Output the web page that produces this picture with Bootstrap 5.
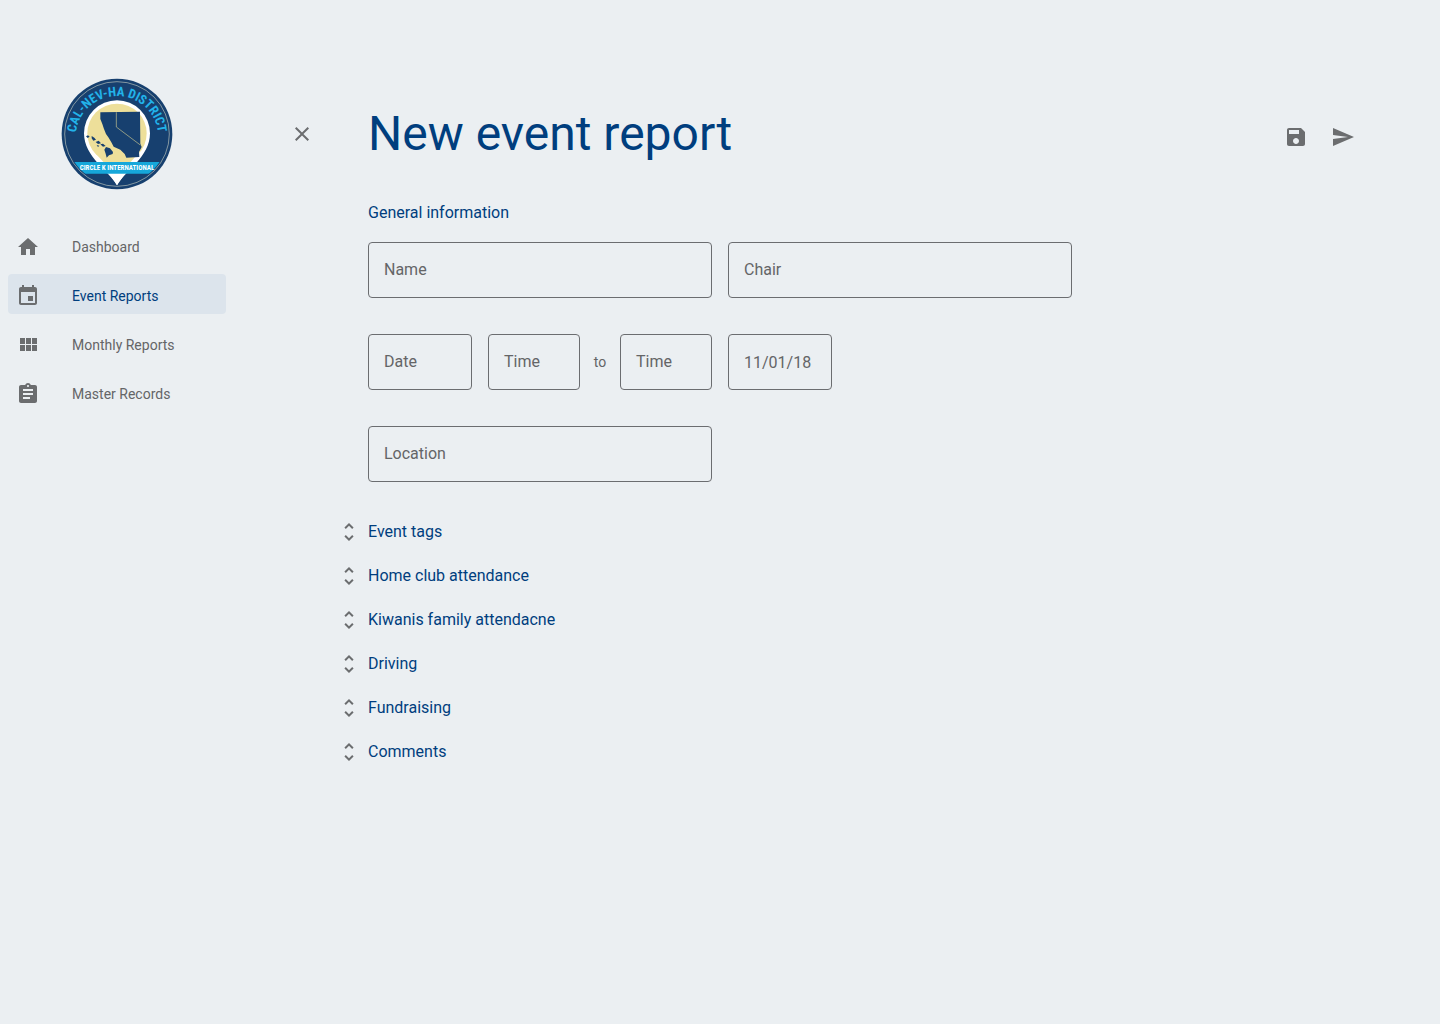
<!DOCTYPE html>
<html lang="en">
<head>
<meta charset="utf-8">
<meta name="viewport" content="width=device-width, initial-scale=1">
<title>New event report</title>
<link href="https://cdn.jsdelivr.net/npm/bootstrap@5.3.0/dist/css/bootstrap.min.css" rel="stylesheet">
<style>
  :root { --page: #ebeff2; --navy: #003e7e; --ink: #646567; --icon: #6b6d6f; }
  body { background: var(--page); color: var(--ink); font-family: Roboto, sans-serif; font-size: 16px; line-height: 24px; }
  .glyph { width: 24px; height: 24px; fill: var(--icon); flex: none; display: block; }
  .side-bar { width: 234px; padding: 78px 8px 0; }
  .crest { width: 112px; height: 112px; display: block; margin: 0 auto 35px; }
  .crest text { font-family: "Roboto Condensed", Roboto, sans-serif; font-weight: 700; text-anchor: middle; }
  .side-nav { gap: 9px; }
  .side-link { height: 40px; padding: 10px 8px 0; gap: 32px; border-radius: 4px; font-size: 14px; color: var(--ink); text-decoration: none; }
  .side-link.active { background: #dce4ec; color: var(--navy); }
  .work-area { padding: 98px 85px 40px 56px; }
  .top-line { gap: 54px; }
  .page-title { font-size: 48px; line-height: 72px; color: var(--navy); font-weight: 400; }
  .tools { gap: 23px; padding-top: 6px; }
  .report-body { max-width: 735px; margin-left: 47px; }
  .form-part { padding-left: 31px; }
  .group-title { font-size: 16px; line-height: 24px; font-weight: 400; color: var(--navy); margin: 31px 0 17px; }
  .form-floating > .field, .field { height: 56px; min-height: 56px; line-height: 24px; padding: 0 15px; border: 1px solid #6b6d70; border-radius: 4px; background: transparent; color: var(--ink); box-shadow: none; }
  .form-floating > .field:focus, .field:focus { background: transparent; border-color: var(--navy); box-shadow: none; }
  .form-floating > .field:not(:placeholder-shown), .form-floating > .field:focus { padding: 20px 15px 4px; }
  .form-floating > label { height: 56px; padding: 15px; line-height: 24px; color: var(--ink); }
  .date-field { width: 104px; }
  .time-field { width: 92px; }
  .to-text { width: 40px; font-size: 14px; text-align: center; }
  .line-gap { margin-bottom: 36px; }
  .fold-list { gap: 20px; padding-top: 2px; }
  .fold { gap: 7px; color: var(--navy); height: 24px; }
</style>
</head>
<body>
<div class="d-flex min-vh-100">
  <aside class="side-bar flex-shrink-0">
    <svg class="crest" viewBox="0 0 336 336" role="img" aria-label="Cal-Nev-Ha District, Circle K International">
      <defs>
        <path id="arc" d="M44 178A124 124 0 1 1 292 178"/>
        <clipPath id="disc"><circle cx="168" cy="168" r="153"/></clipPath>
      </defs>
      <circle cx="168" cy="168" r="166" fill="#17406f"/>
      <circle cx="168" cy="168" r="157" fill="none" stroke="#b9c3b9" stroke-width="2"/>
      <path fill="#fff" d="M168 322C145 280 69 237 69 166a99 99 0 0 1 198 0C267 237 191 280 168 322Z"/>
      <circle cx="168" cy="166" r="89" fill="#eddf9a"/>
      <path fill="#eddf9a" d="M98 220H238L208 253H128Z"/>
      <path fill="#17406f" d="M118 103L237 101 238 197 242 207 234 222 235 237 196 239 191 228 178 215 158 206 151 193 143 179 135 168 129 153 124 138 118 123Z"/>
      <path fill="none" stroke="#c9c68f" stroke-width="2" d="M166 103V147L238 201"/>
      <path fill="#17406f" d="M135 207l12 4 9 11-1 6-11 4-7 7-3-12-4-12zM118 199l8-2 8 7-8 2zM104 192l9-4 7 8-9 2zM107 201l8 2-4 4zM92 174l8 5 5 6-8 3-5-7zM75 175l6-3 5 4-6 4z"/>
      <g clip-path="url(#disc)"><path fill="#16a7da" d="M0 252H336V287H0z"/></g>
      <path fill="#fff" d="M146 288H191L168 322Z"/>
      <text font-size="39" fill="#22b3ea"><textPath href="#arc" startOffset="50%">CAL-NEV-HA DISTRICT</textPath></text>
      <text x="168" y="277" font-size="21" fill="#fff">CIRCLE K INTERNATIONAL</text>
    </svg>
    <nav class="side-nav d-flex flex-column" aria-label="Main">
      <a class="side-link d-flex" href="#"><svg class="glyph" viewBox="0 0 24 24"><path d="M10 20v-6h4v6h5v-8h3L12 3 2 12h3v8z"/></svg>Dashboard</a>
      <a class="side-link d-flex active" href="#" aria-current="page"><svg class="glyph" viewBox="0 0 24 24"><path d="M17 12h-5v5h5v-5zM16 1v2H8V1H6v2H5c-1.11 0-1.99.9-1.99 2L3 19c0 1.1.89 2 2 2h14c1.1 0 2-.9 2-2V5c0-1.1-.9-2-2-2h-1V1h-2zm3 18H5V8h14v11z"/></svg>Event Reports</a>
      <a class="side-link d-flex" href="#"><svg class="glyph" viewBox="0 0 24 24"><path d="M4 11h5V5H4v6zm0 7h5v-6H4v6zm6 0h5v-6h-5v6zm6 0h5v-6h-5v6zm-6-7h5V5h-5v6zm6-6v6h5V5h-5z"/></svg>Monthly Reports</a>
      <a class="side-link d-flex" href="#"><svg class="glyph" viewBox="0 0 24 24"><path d="M19 3h-4.18C14.4 1.84 13.3 1 12 1c-1.3 0-2.4.84-2.82 2H5c-1.1 0-2 .9-2 2v14c0 1.1.9 2 2 2h14c1.1 0 2-.9 2-2V5c0-1.1-.9-2-2-2zm-7 0c.55 0 1 .45 1 1s-.45 1-1 1-1-.45-1-1 .45-1 1-1zm2 14H7v-2h7v2zm3-4H7v-2h10v2zm0-4H7V7h10v2z"/></svg>Master Records</a>
    </nav>
  </aside>

  <main class="work-area flex-grow-1">
    <header class="top-line d-flex align-items-center">
      <button class="btn p-0 border-0" type="button" aria-label="Close"><svg class="glyph" viewBox="0 0 24 24"><path d="M19 6.41L17.59 5 12 10.59 6.41 5 5 6.41 10.59 12 5 17.59 6.41 19 12 13.41 17.59 19 19 17.59 13.41 12z"/></svg></button>
      <h1 class="page-title mb-0 flex-grow-1">New event report</h1>
      <div class="tools d-flex">
        <button class="btn p-0 border-0" type="button" aria-label="Save"><svg class="glyph" viewBox="0 0 24 24"><path d="M17 3H5c-1.11 0-2 .9-2 2v14c0 1.1.89 2 2 2h14c1.1 0 2-.9 2-2V7l-4-4zm-5 16c-1.66 0-3-1.34-3-3s1.34-3 3-3 3 1.34 3 3-1.34 3-3 3zm3-10H5V5h10v4z"/></svg></button>
        <button class="btn p-0 border-0" type="button" aria-label="Send"><svg class="glyph" viewBox="0 0 24 24"><path d="M2.01 21L23 12 2.01 3 2 10l15 2-15 2z"/></svg></button>
      </div>
    </header>

    <div class="report-body">
      <form class="form-part">
        <h2 class="group-title">General information</h2>
        <div class="row gx-3 line-gap">
          <div class="col-6"><div class="form-floating"><input class="form-control field" id="name" type="text" placeholder=" "><label for="name">Name</label></div></div>
          <div class="col-6"><div class="form-floating"><input class="form-control field" id="chair" type="text" placeholder=" "><label for="chair">Chair</label></div></div>
        </div>
        <div class="d-flex align-items-center line-gap">
          <div class="form-floating date-field me-3"><input class="form-control field" id="date" type="text" placeholder=" "><label for="date">Date</label></div>
          <div class="form-floating time-field"><input class="form-control field" id="start" type="text" placeholder=" "><label for="start">Time</label></div>
          <span class="to-text">to</span>
          <div class="form-floating time-field me-3"><input class="form-control field" id="end" type="text" placeholder=" "><label for="end">Time</label></div>
          <input class="form-control field date-field" type="text" value="11/01/18" aria-label="End date">
        </div>
        <div class="row gx-3 line-gap">
          <div class="col-6"><div class="form-floating"><input class="form-control field" id="place" type="text" placeholder=" "><label for="place">Location</label></div></div>
        </div>
      </form>
      <div class="fold-list d-flex flex-column align-items-start">
        <button class="btn p-0 border-0 fold d-flex align-items-center" type="button" aria-expanded="false"><svg class="glyph" viewBox="0 0 24 24"><path d="M12 5.83L15.17 9l1.41-1.41L12 3 7.41 7.59 8.83 9 12 5.83zm0 12.34L8.83 15l-1.41 1.41L12 21l4.59-4.59L15.17 15 12 18.17z"/></svg>Event tags</button>
        <button class="btn p-0 border-0 fold d-flex align-items-center" type="button" aria-expanded="false"><svg class="glyph" viewBox="0 0 24 24"><path d="M12 5.83L15.17 9l1.41-1.41L12 3 7.41 7.59 8.83 9 12 5.83zm0 12.34L8.83 15l-1.41 1.41L12 21l4.59-4.59L15.17 15 12 18.17z"/></svg>Home club attendance</button>
        <button class="btn p-0 border-0 fold d-flex align-items-center" type="button" aria-expanded="false"><svg class="glyph" viewBox="0 0 24 24"><path d="M12 5.83L15.17 9l1.41-1.41L12 3 7.41 7.59 8.83 9 12 5.83zm0 12.34L8.83 15l-1.41 1.41L12 21l4.59-4.59L15.17 15 12 18.17z"/></svg>Kiwanis family attendacne</button>
        <button class="btn p-0 border-0 fold d-flex align-items-center" type="button" aria-expanded="false"><svg class="glyph" viewBox="0 0 24 24"><path d="M12 5.83L15.17 9l1.41-1.41L12 3 7.41 7.59 8.83 9 12 5.83zm0 12.34L8.83 15l-1.41 1.41L12 21l4.59-4.59L15.17 15 12 18.17z"/></svg>Driving</button>
        <button class="btn p-0 border-0 fold d-flex align-items-center" type="button" aria-expanded="false"><svg class="glyph" viewBox="0 0 24 24"><path d="M12 5.83L15.17 9l1.41-1.41L12 3 7.41 7.59 8.83 9 12 5.83zm0 12.34L8.83 15l-1.41 1.41L12 21l4.59-4.59L15.17 15 12 18.17z"/></svg>Fundraising</button>
        <button class="btn p-0 border-0 fold d-flex align-items-center" type="button" aria-expanded="false"><svg class="glyph" viewBox="0 0 24 24"><path d="M12 5.83L15.17 9l1.41-1.41L12 3 7.41 7.59 8.83 9 12 5.83zm0 12.34L8.83 15l-1.41 1.41L12 21l4.59-4.59L15.17 15 12 18.17z"/></svg>Comments</button>
      </div>
    </div>
  </main>
</div>
<script src="https://cdn.jsdelivr.net/npm/bootstrap@5.3.0/dist/js/bootstrap.bundle.min.js"></script>
</body>
</html>
